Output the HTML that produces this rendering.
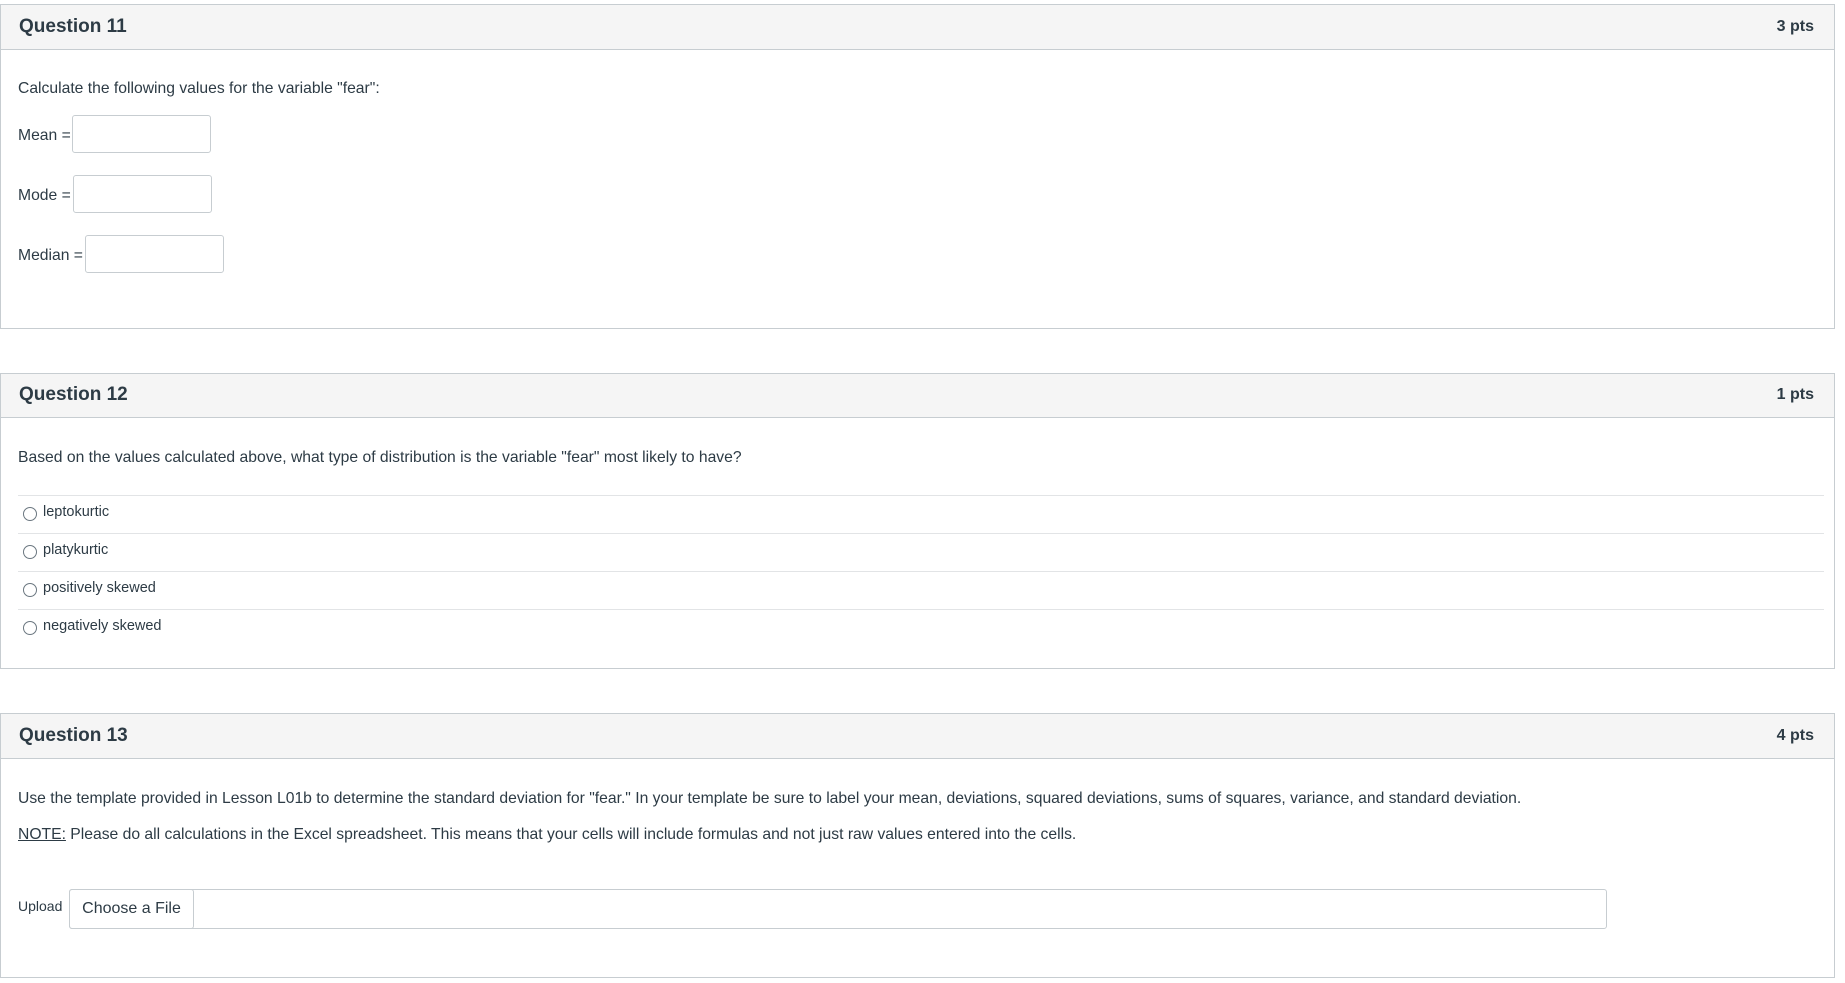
<!DOCTYPE html><html><head><style>
body{margin:0;width:1845px;height:983px;position:relative;background:#fff;font-family:"Liberation Sans",sans-serif;color:#2d3b45;overflow:hidden}
.a{position:absolute}
.hd{position:absolute;left:0;width:1833px;background:#f5f5f5;border:1px solid #c7cdd1;}
.bd{position:absolute;left:0;width:1833px;border:1px solid #c7cdd1;border-top:none}
.t{position:absolute;left:18px;font-size:19px;font-weight:bold;}
.p{position:absolute;right:20px;font-size:16px;font-weight:bold;}
.s{font-size:15.7px}
.in{position:absolute;border:1px solid #c7cdd1;border-radius:3px;height:36px;width:137px}
.ln{position:absolute;left:18px;width:1806px;height:1px;background:#e2e4e6}
.r{position:absolute;left:23px;width:12px;height:12px;border:1.5px solid #6b7780;border-radius:50%}
.o{position:absolute;left:43px;font-size:14.5px}
</style></head><body>
<div class="hd" style="top:4px;height:44px"><div class="t" style="top:11px">Question 11</div><div class="p" style="top:13px">3 pts</div></div>
<div class="bd" style="top:49px;height:279px"></div>
<div class="a s" style="left:18px;top:80px">Calculate the following values for the variable "fear":</div>
<div class="a s" style="left:18px;top:127px">Mean =</div><div class="in" style="left:72px;top:115px"></div>
<div class="a s" style="left:18px;top:187px">Mode =</div><div class="in" style="left:73px;top:175px"></div>
<div class="a s" style="left:18px;top:247px">Median =</div><div class="in" style="left:85px;top:235px"></div>

<div class="hd" style="top:373px;height:43px"><div class="t" style="top:10px">Question 12</div><div class="p" style="top:12px">1 pts</div></div>
<div class="bd" style="top:417px;height:251px"></div>
<div class="a s" style="left:18px;top:449px">Based on the values calculated above, what type of distribution is the variable "fear" most likely to have?</div>
<div class="ln" style="top:495px"></div><div class="ln" style="top:533px"></div><div class="ln" style="top:571px"></div><div class="ln" style="top:609px"></div>
<div class="r" style="top:507px"></div><div class="o" style="top:504px">leptokurtic</div>
<div class="r" style="top:545px"></div><div class="o" style="top:542px">platykurtic</div>
<div class="r" style="top:583px"></div><div class="o" style="top:580px">positively skewed</div>
<div class="r" style="top:621px"></div><div class="o" style="top:618px">negatively skewed</div>

<div class="hd" style="top:713px;height:44px"><div class="t" style="top:11px">Question 13</div><div class="p" style="top:13px">4 pts</div></div>
<div class="bd" style="top:758px;height:219px"></div>
<div class="a s" style="left:18px;top:790px">Use the template provided in Lesson L01b to determine the standard deviation for "fear." In your template be sure to label your mean, deviations, squared deviations, sums of squares, variance, and standard deviation.</div>
<div class="a s" style="left:18px;top:826px"><u>NOTE:</u> Please do all calculations in the Excel spreadsheet. This means that your cells will include formulas and not just raw values entered into the cells.</div>
<div class="a" style="left:18px;top:898px;font-size:14px">Upload</div>
<div class="a" style="left:69px;top:889px;width:1536px;height:38px;border:1px solid #c7cdd1;border-radius:3px"></div>
<div class="a" style="left:69px;top:889px;width:123px;height:38px;border:1px solid #c7cdd1;border-radius:3px;font-size:16px;line-height:38px;text-align:center">Choose a File</div>
</body></html>
